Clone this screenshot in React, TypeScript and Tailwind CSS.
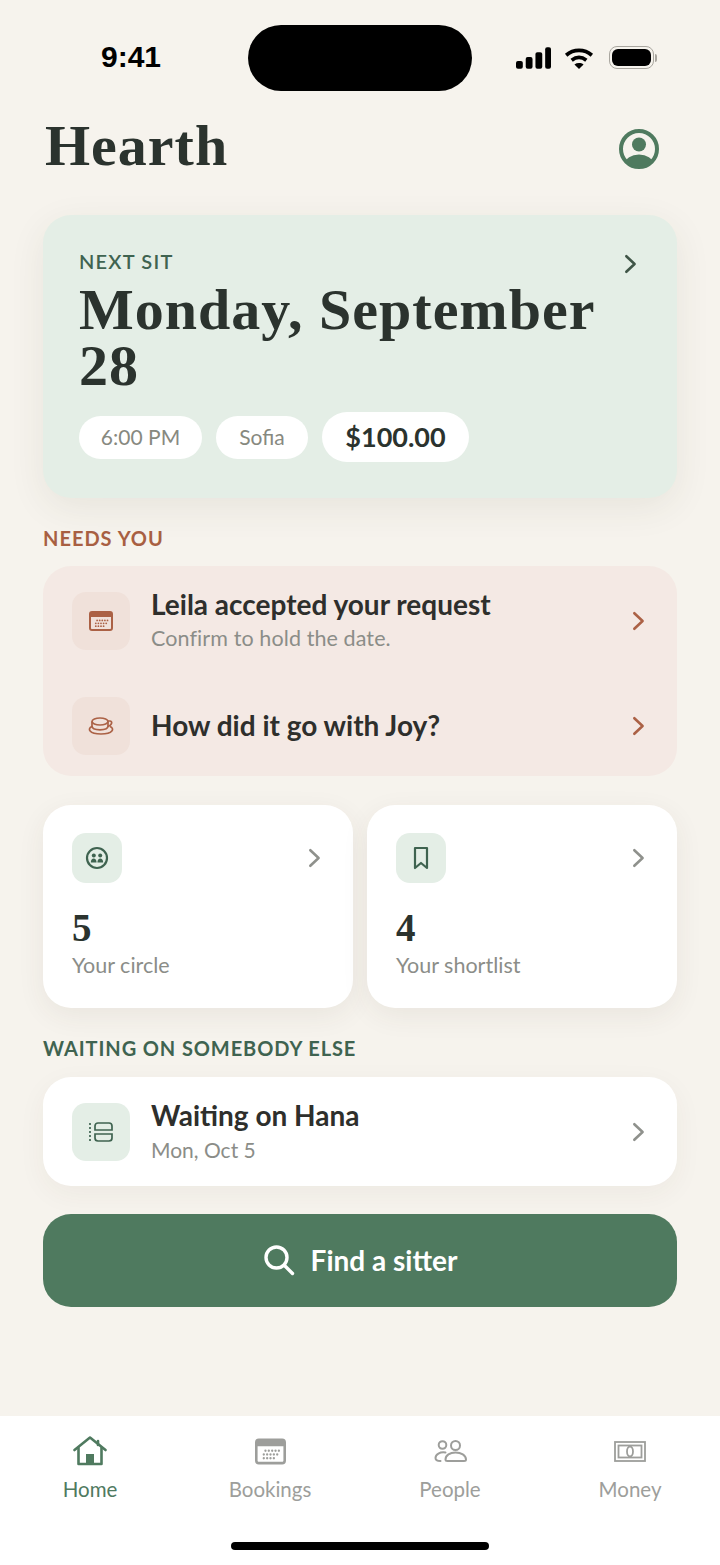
import type { ReactNode } from "react";

const serif = "font-['Liberation_Serif',serif]";

function Chevron({ className }: { className: string }) {
  return (
    <svg viewBox="0 0 24 24" fill="none" stroke="currentColor" strokeWidth="2.8" strokeLinecap="round" strokeLinejoin="round" className={className}>
      <path d="M8 3.5 17 12l-9 8.5" />
    </svg>
  );
}

function CalendarIcon({ className, dots }: { className: string; dots: string }) {
  const cells = [];
  for (let row = 0; row < 3; row++) {
    for (let col = 0; col < 5; col++) {
      if (row === 2 && col === 4) continue;
      cells.push(<circle key={`${row}-${col}`} cx={6.8 + col * 2.6 + (row === 0 ? 1.3 : 0)} cy={9.4 + row * 2.9} r="0.9" fill={dots} />);
    }
  }
  return (
    <svg viewBox="0 0 24 20" className={className}>
      <path fillRule="evenodd" fill="currentColor" d="M3 0h18a3 3 0 0 1 3 3v14a3 3 0 0 1-3 3H3a3 3 0 0 1-3-3V3a3 3 0 0 1 3-3Zm-1 6v11c0 .6.4 1 1 1h18c.6 0 1-.4 1-1V6Z" />
      {cells}
    </svg>
  );
}

function IconTile({ tone, size, children }: { tone: "rose" | "sage"; size: "sm" | "lg"; children: ReactNode }) {
  const color = tone === "rose" ? "bg-[#f0e1da] text-[#ab6145]" : "bg-[#e4eee6] text-[#3f6350]";
  const box = size === "lg" ? "h-[58px] w-[58px] rounded-[14px]" : "h-[50px] w-[50px] rounded-[14px]";
  return <div className={`flex shrink-0 items-center justify-center ${box} ${color}`}>{children}</div>;
}

function Pill({ width, children }: { width: string; children: ReactNode }) {
  return <span className={`flex h-[43px] items-center justify-center rounded-full bg-white text-[21px] text-[#87897f] ${width}`}>{children}</span>;
}

function StatCard({ icon, value, label }: { icon: ReactNode; value: string; label: string }) {
  return (
    <div className="h-[203px] flex-1 rounded-[28px] bg-white px-[29px] pt-[28px] shadow-[0_8px_28px_rgba(70,60,40,0.07)]">
      <div className="flex items-center justify-between">
        <IconTile tone="sage" size="sm">{icon}</IconTile>
        <Chevron className="mr-[-1px] h-[22px] w-[22px] text-[#8f918c]" />
      </div>
      <p className={`mt-[23px] text-[39px] font-bold leading-[44px] text-[#2b332e] ${serif}`}>{value}</p>
      <p className="mt-[1px] text-[21.5px] leading-[28px] text-[#8b8d88]">{label}</p>
    </div>
  );
}

function TabItem({ icon, label, active }: { icon: ReactNode; label: string; active?: boolean }) {
  return (
    <div className={`flex w-[180px] flex-col items-center ${active ? "text-[#4f7a5f]" : "text-[#9d9e9b]"}`}>
      <div className="flex h-[34px] items-center justify-center">{icon}</div>
      <span className="mt-[8px] text-[20.5px] leading-[26px]">{label}</span>
    </div>
  );
}

export default function App() {
  return (
    <div className="flex h-[1565px] w-[720px] flex-col overflow-hidden bg-[#f6f3ed] font-['Lato',sans-serif]">
      <div className="flex h-[116px] shrink-0 items-start">
        <span className="ml-[101px] mt-[40px] font-['Liberation_Sans',sans-serif] text-[30px] font-bold leading-[34px] text-black">9:41</span>
        <div className="ml-[87px] mt-[25px] h-[66px] w-[224px] rounded-[33px] bg-black" />
        <div className="ml-[44px] mt-[46px] flex items-center text-black">
          <svg viewBox="0 0 36 22" className="h-[22px] w-[35px]" fill="currentColor">
            <rect x="0" y="14" width="7" height="8" rx="2" /><rect x="10" y="10" width="7" height="12" rx="2" /><rect x="20" y="5" width="7" height="17" rx="2" /><rect x="30" y="0" width="6" height="22" rx="2" />
          </svg>
          <svg viewBox="0 0 32 24" className="ml-[12px] h-[22px] w-[32px]" fill="none" stroke="currentColor" strokeWidth="4">
            <path d="M2 9c8-7 20-7 28 0" /><path d="M8 14.5c5-4 11-4 16 0" /><path d="M16 24l-5-5c3-2 7-2 10 0Z" fill="currentColor" stroke="none" />
          </svg>
          <div className="ml-[14px] flex items-center">
            <div className="flex h-[23px] w-[45px] items-center rounded-[8px] border border-[#a9a69f] p-[2px]"><div className="h-full w-full rounded-[6px] bg-black" /></div>
            <div className="ml-px h-[8px] w-[2px] rounded-r-full bg-[#a9a69f]" />
          </div>
        </div>
      </div>

      <div className="mx-[43px] flex h-[99px] shrink-0 items-start justify-between">
        <h1 className={`ml-[2px] text-[58px] font-bold leading-[60px] tracking-[1px] text-[#2b332e] ${serif}`}>Hearth</h1>
        <svg viewBox="0 0 40 40" className="mr-[18px] mt-[13px] h-[40px] w-[40px]">
          <defs><clipPath id="avatar"><circle cx="20" cy="20" r="17" /></clipPath></defs>
          <circle cx="20" cy="20" r="18" fill="none" stroke="#4f7a5f" strokeWidth="4" />
          <g clipPath="url(#avatar)" fill="#4f7a5f"><circle cx="20" cy="15.5" r="7" /><ellipse cx="20" cy="35" rx="14" ry="9.5" /></g>
        </svg>
      </div>

      <section className="mx-[43px] h-[283px] shrink-0 rounded-[28px] bg-[#e4eee6] px-[36px] pt-[33px] shadow-[0_10px_36px_rgba(70,60,40,0.08)]">
        <div className="flex items-start justify-between">
          <span className="text-[20px] font-semibold leading-[26px] tracking-[1.2px] text-[#3f6350]">NEXT SIT</span>
          <Chevron className="mt-[5px] h-[22px] w-[22px] text-[#3f5547]" />
        </div>
        <h2 className={`mt-[7px] text-[58px] font-bold leading-[56px] tracking-[1px] text-[#2b332e] ${serif}`}>Monday, September 28</h2>
        <div className="mt-[18px] flex items-center gap-[14px]">
          <Pill width="w-[123px]">6:00 PM</Pill>
          <Pill width="w-[92px]">Sofia</Pill>
          <span className="flex h-[50px] w-[147px] items-center justify-center rounded-full bg-white text-[27px] font-bold text-[#2b332e]">$100.00</span>
        </div>
      </section>

      <h3 className="mx-[43px] mt-[27px] shrink-0 text-[20px] font-bold leading-[26px] tracking-[1px] text-[#a85f42]">NEEDS YOU</h3>

      <section className="mx-[43px] mt-[15px] h-[210px] shrink-0 rounded-[28px] bg-[#f4e9e4] px-[29px]">
        <div className="flex h-[110px] items-center">
          <IconTile tone="rose" size="lg"><CalendarIcon className="h-[20px] w-[24px]" dots="#ab6145" /></IconTile>
          <div className="ml-[21px] flex-1 pb-[3px]">
            <p className="text-[28px] font-bold leading-[34px] text-[#2e2f2c]">Leila accepted your request</p>
            <p className="mt-[3px] text-[21.5px] leading-[28px] tracking-[0.1px] text-[#8b8d88]">Confirm to hold the date.</p>
          </div>
          <Chevron className="mr-[-1px] h-[22px] w-[22px] text-[#ab6145]" />
        </div>
        <div className="flex h-[100px] items-center">
          <IconTile tone="rose" size="lg">
            <svg viewBox="0 0 26 18" className="h-[18px] w-[26px]" fill="none" stroke="currentColor" strokeWidth="1.7">
              <ellipse cx="12" cy="4.500" rx="8" ry="3.500" /><path d="M4 4.500V9c0 2.500 3 3.800 8 3.800s8-1.300 8-3.800V4.500" /><path d="M20 4h2c2.500 0 2.500 4-2 5.500" />
              <path d="M4 9.500C-1 11.500 1 17 13 17s14-5.500 9-7.500" />
            </svg>
          </IconTile>
          <p className="ml-[21px] flex-1 pb-[3px] text-[28px] font-bold leading-[34px] text-[#2e2f2c]">How did it go with Joy?</p>
          <Chevron className="mr-[-1px] h-[22px] w-[22px] text-[#ab6145]" />
        </div>
      </section>

      <div className="mx-[43px] mt-[29px] flex shrink-0 gap-[14px]">
        <StatCard
          value="5"
          label="Your circle"
          icon={
            <svg viewBox="0 0 24 24" className="h-[24px] w-[24px]" fill="none" stroke="currentColor" strokeWidth="2.2">
              <circle cx="12" cy="12" r="10" />
              <circle cx="8.800" cy="9.500" r="2" fill="currentColor" stroke="none" /><circle cx="15.200" cy="9.500" r="2" fill="currentColor" stroke="none" />
              <path d="M5.800 16.500c0-5.500 5.800-5.500 5.800 0ZM12.400 16.500c0-5.500 5.800-5.500 5.800 0Z" fill="currentColor" stroke="none" />
            </svg>
          }
        />
        <StatCard
          value="4"
          label="Your shortlist"
          icon={
            <svg viewBox="0 0 24 24" className="h-[24px] w-[24px]" fill="none" stroke="currentColor" strokeWidth="2.2" strokeLinejoin="round">
              <path d="M6 2h12v20l-6-5-6 5Z" />
            </svg>
          }
        />
      </div>

      <h3 className="mx-[43px] mt-[27px] shrink-0 text-[20px] font-bold leading-[26px] tracking-[0.9px] text-[#3f6350]">WAITING ON SOMEBODY ELSE</h3>

      <section className="mx-[43px] mt-[16px] flex h-[109px] shrink-0 items-center rounded-[28px] bg-white px-[29px] shadow-[0_8px_28px_rgba(70,60,40,0.05)]">
        <IconTile tone="sage" size="lg">
          <svg viewBox="0 0 24 20" className="h-[20px] w-[24px]" fill="none" stroke="currentColor" strokeWidth="1.7">
            <path d="M6 8V4a3 3 0 0 1 3-3h11a3 3 0 0 1 3 3v4ZM6 12v4a3 3 0 0 0 3 3h11a3 3 0 0 0 3-3v-4Z" />
            <path d="M1 1v18" strokeDasharray="2 2" />
          </svg>
        </IconTile>
        <div className="ml-[21px] flex-1 pb-[2px]">
          <p className="text-[28px] font-bold leading-[34px] text-[#2e2f2c]">Waiting on Hana</p>
          <p className="mt-[4px] text-[21px] leading-[28px] text-[#8b8d88]">Mon, Oct 5</p>
        </div>
        <Chevron className="mr-[-1px] h-[22px] w-[22px] text-[#8f918c]" />
      </section>

      <button type="button" className="mx-[43px] mt-[28px] flex h-[93px] shrink-0 items-center justify-center gap-[16px] rounded-[28px] bg-[#4f7a5f] pb-[2px] text-[28px] font-bold text-white">
        <svg viewBox="0 0 32 32" className="h-[32px] w-[32px]" fill="none" stroke="currentColor" strokeWidth="3.4" strokeLinecap="round">
          <circle cx="13.500" cy="13.500" r="10.500" /><path d="m21.500 21.500 8 8" />
        </svg>
        Find a sitter
      </button>

      <nav className="mt-auto h-[149px] shrink-0 bg-white pt-[18px]">
        <div className="flex">
          <TabItem
            active
            label="Home"
            icon={
              <svg viewBox="0 0 34 30" className="h-[30px] w-[34px]" fill="none" stroke="currentColor" strokeWidth="2.6" strokeLinecap="round" strokeLinejoin="round">
                <path d="M1.500 14 17 1.500 32.500 14" /><path d="M5.500 12v16h23V12" /><path d="M25 5v4" /><rect x="13" y="18" width="8" height="10" fill="currentColor" stroke="none" />
              </svg>
            }
          />
          <TabItem label="Bookings" icon={<CalendarIcon className="h-[27px] w-[31px]" dots="#9d9e9b" />} />
          <TabItem
            label="People"
            icon={
              <svg viewBox="0 0 33 22" className="h-[22px] w-[33px]" fill="none" stroke="currentColor" strokeWidth="2" strokeLinecap="round">
                <circle cx="8.500" cy="5" r="3.800" /><circle cx="21.500" cy="5.500" r="4.500" />
                <path d="M11.500 12.500C6 11.500 1.500 14.500 1.500 18c0 2 2 3 5 3" /><path d="M11.500 19.500c0-4.500 4.500-7 10-7s10.500 2.500 10.500 7c0 1-.8 1.500-2 1.500H13.500c-1.200 0-2-.5-2-1.500Z" />
              </svg>
            }
          />
          <TabItem
            label="Money"
            icon={
              <svg viewBox="0 0 32 21" className="h-[21px] w-[32px]" fill="none" stroke="currentColor" strokeWidth="1.800">
                <rect x="1" y="1" width="30" height="19" /><rect x="4.500" y="4.500" width="23" height="12" /><ellipse cx="16" cy="10.500" rx="3" ry="5" />
              </svg>
            }
          />
        </div>
        <div className="mx-auto mt-[40px] h-[8px] w-[258px] rounded-full bg-black" />
      </nav>
    </div>
  );
}
